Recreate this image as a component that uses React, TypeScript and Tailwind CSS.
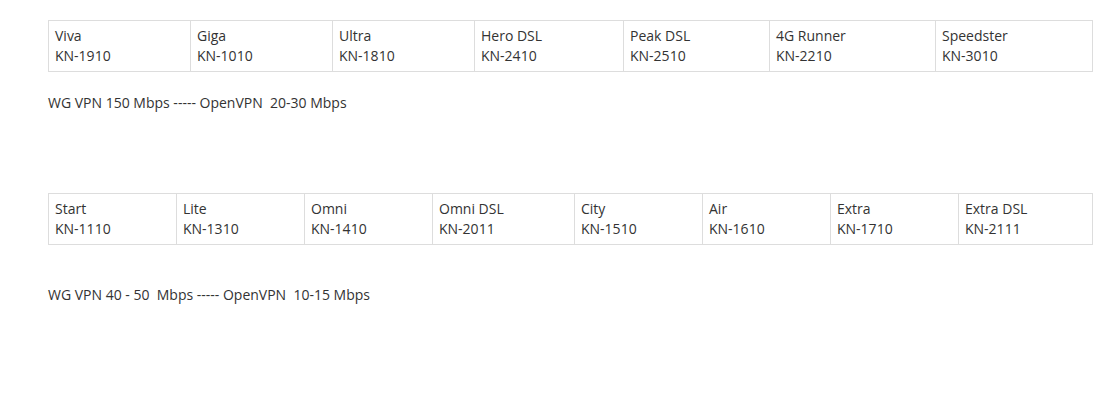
const rowA = [
  { name: "Viva", code: "KN-1910", w: "w-[142px]" },
  { name: "Giga", code: "KN-1010", w: "w-[142px]" },
  { name: "Ultra", code: "KN-1810", w: "w-[142px]" },
  { name: "Hero DSL", code: "KN-2410", w: "w-[149px]" },
  { name: "Peak DSL", code: "KN-2510", w: "w-[146px]" },
  { name: "4G Runner", code: "KN-2210", w: "w-[166px]" },
  { name: "Speedster", code: "KN-3010", w: "w-[157px]" },
];

const rowB = [
  { name: "Start", code: "KN-1110", w: "w-[128px]" },
  { name: "Lite", code: "KN-1310", w: "w-[128px]" },
  { name: "Omni", code: "KN-1410", w: "w-[128px]" },
  { name: "Omni DSL", code: "KN-2011", w: "w-[142px]" },
  { name: "City", code: "KN-1510", w: "w-[128px]" },
  { name: "Air", code: "KN-1610", w: "w-[128px]" },
  { name: "Extra", code: "KN-1710", w: "w-[128px]" },
  { name: "Extra DSL", code: "KN-2111", w: "w-[134px]" },
];

type Plan = { name: string; code: string; w: string };

function PlanTable({ plans }: { plans: Plan[] }) {
  return (
    <table className="border-collapse table-fixed w-[1045px]">
      <tbody>
        <tr>
          {plans.map((p) => (
            <td key={p.code} className={`${p.w} border border-[#dddddd] px-[6px] py-[5px] align-top leading-[20px]`}>
              <div>{p.name}</div>
              <div>{p.code}</div>
            </td>
          ))}
        </tr>
      </tbody>
    </table>
  );
}

export default function App() {
  return (
    <div className="min-h-screen bg-white pl-[48px] pt-[20px] text-[14px] text-[#333333] font-['Open_Sans',sans-serif]">
      <PlanTable plans={rowA} />
      <p className="mt-[21px] leading-[20px] whitespace-pre">WG VPN 150 Mbps ----- OpenVPN  20-30 Mbps</p>
      <div className="mt-[80px]">
        <PlanTable plans={rowB} />
      </div>
      <p className="mt-[40px] leading-[20px] whitespace-pre">WG VPN 40 - 50  Mbps ----- OpenVPN  10-15 Mbps</p>
    </div>
  );
}
